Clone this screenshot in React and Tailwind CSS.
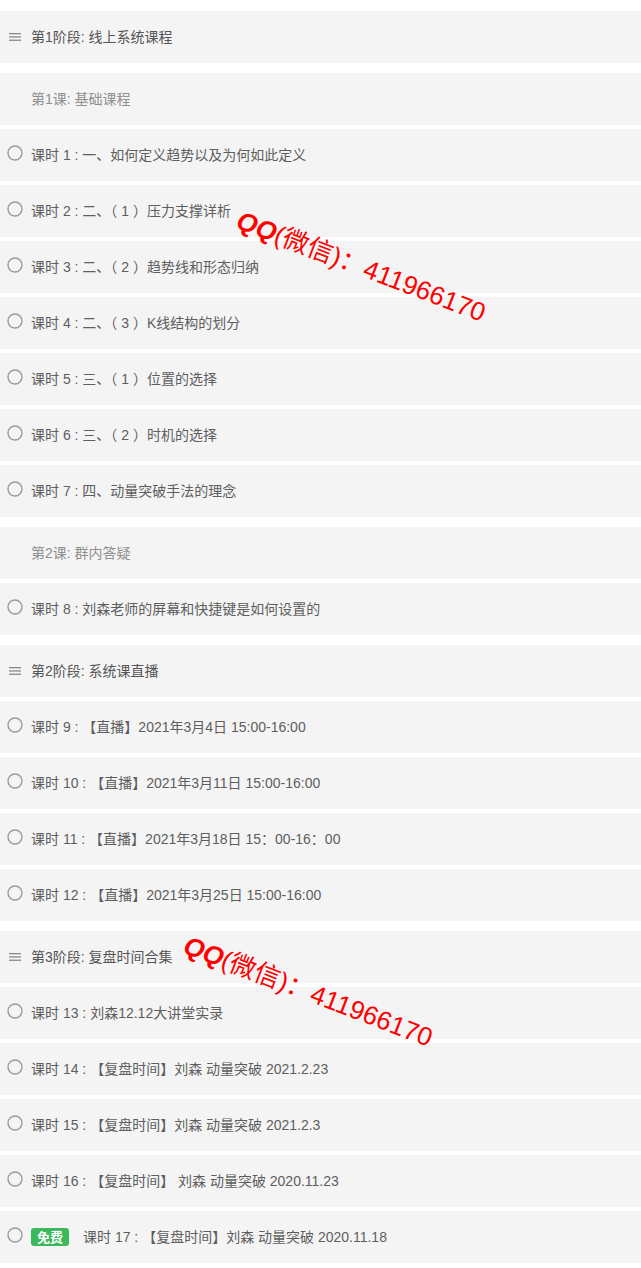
import React from "react";

const items = [
  { type: "chapter", title: "第1阶段: 线上系统课程", mb: "mb-[10px]" },
  { type: "unit", title: "第1课: 基础课程", mb: "mb-1" },
  { type: "lesson", title: "课时 1 : 一、如何定义趋势以及为何如此定义", mb: "mb-1" },
  { type: "lesson", title: "课时 2 : 二、（ 1 ）压力支撑详析", mb: "mb-1" },
  { type: "lesson", title: "课时 3 : 二、（ 2 ）趋势线和形态归纳", mb: "mb-1" },
  { type: "lesson", title: "课时 4 : 二、（ 3 ）K线结构的划分", mb: "mb-1" },
  { type: "lesson", title: "课时 5 : 三、（ 1 ）位置的选择", mb: "mb-1" },
  { type: "lesson", title: "课时 6 : 三、（ 2 ）时机的选择", mb: "mb-1" },
  { type: "lesson", title: "课时 7 : 四、动量突破手法的理念", mb: "mb-[10px]" },
  { type: "unit", title: "第2课: 群内答疑", mb: "mb-1" },
  { type: "lesson", title: "课时 8 : 刘森老师的屏幕和快捷键是如何设置的", mb: "mb-[10px]" },
  { type: "chapter", title: "第2阶段: 系统课直播", mb: "mb-1" },
  { type: "lesson", title: "课时 9 : 【直播】2021年3月4日 15:00-16:00", mb: "mb-1" },
  { type: "lesson", title: "课时 10 : 【直播】2021年3月11日 15:00-16:00", mb: "mb-1" },
  { type: "lesson", title: "课时 11 : 【直播】2021年3月18日 15：00-16：00", mb: "mb-1" },
  { type: "lesson", title: "课时 12 : 【直播】2021年3月25日 15:00-16:00", mb: "mb-[10px]" },
  { type: "chapter", title: "第3阶段: 复盘时间合集", mb: "mb-1" },
  { type: "lesson", title: "课时 13 : 刘森12.12大讲堂实录", mb: "mb-1" },
  { type: "lesson", title: "课时 14 : 【复盘时间】刘森 动量突破 2021.2.23", mb: "mb-1" },
  { type: "lesson", title: "课时 15 : 【复盘时间】刘森 动量突破 2021.2.3", mb: "mb-1" },
  { type: "lesson", title: "课时 16 : 【复盘时间】 刘森 动量突破 2020.11.23", mb: "mb-1" },
  { type: "lesson", title: "课时 17 : 【复盘时间】刘森 动量突破 2020.11.18", mb: "mb-1", free: true },
];

function MenuIcon() {
  return (
    <svg width="12" height="8" viewBox="0 0 12 8" className="shrink-0">
      <rect x="0" y="0" width="12" height="1.3" fill="#8a8a8a" />
      <rect x="0" y="3.3" width="12" height="1.3" fill="#8a8a8a" />
      <rect x="0" y="6.6" width="12" height="1.3" fill="#8a8a8a" />
    </svg>
  );
}

function CircleIcon() {
  return (
    <svg width="16" height="16" viewBox="0 0 16 16" className="shrink-0 -mt-[4px]">
      <circle cx="8" cy="8" r="7" fill="none" stroke="#9a9a9a" strokeWidth="1.4" />
    </svg>
  );
}

function Row({ item }) {
  return (
    <div className={`h-[52px] bg-[#f4f4f4] flex items-center ${item.mb}`}>
      <div className="w-[31px] shrink-0 flex justify-center pr-[1px]">
        {item.type === "chapter" && <MenuIcon />}
        {item.type === "lesson" && <CircleIcon />}
      </div>
      {item.free && (
        <span className="mr-[14px] h-[18px] w-[38px] rounded-[3px] bg-[#3cb95b] text-white text-[13px] flex items-center justify-center font-bold leading-none">
          免费
        </span>
      )}
      <span
        className={
          item.type === "unit"
            ? "text-[14px] text-[#8f8f8f]"
            : item.type === "chapter"
            ? "text-[14px] text-[#555]"
            : "text-[14px] text-[#5e5e5e]"
        }
      >
        {item.title}
      </span>
    </div>
  );
}

function Watermark({ className }) {
  return (
    <div
      className={`absolute origin-left rotate-[21deg] text-[26px] leading-[30px] text-[#ff0000] whitespace-nowrap pointer-events-none ${className}`}
    >
      <span className="font-bold italic">QQ</span>(微信)：411966170
    </div>
  );
}

export default function App() {
  return (
    <div
      className="relative w-[641px] min-h-[1268px] bg-white pt-[11px] overflow-hidden"
      style={{ fontFamily: '"Liberation Sans", "Noto Sans CJK SC", sans-serif' }}
    >
      {items.map((item, i) => (
        <Row key={i} item={item} />
      ))}
      <Watermark className="left-[238px] top-[204px]" />
      <Watermark className="left-[185px] top-[929px]" />
    </div>
  );
}
